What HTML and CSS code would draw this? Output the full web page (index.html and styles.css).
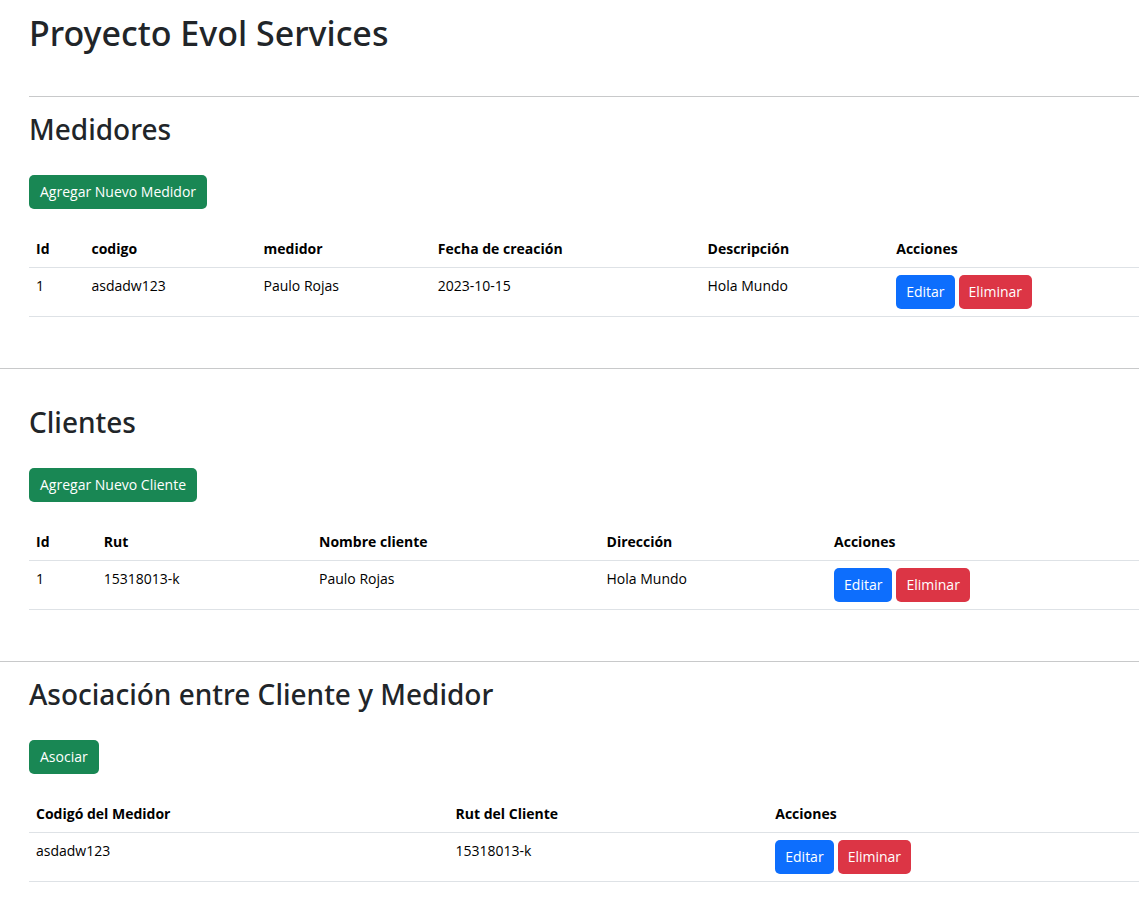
FILE: index.html
```html
<!DOCTYPE html>
<html lang="es">
<head>
<meta charset="utf-8">
<title>Proyecto Evol Services</title>
<link rel="stylesheet" href="styles.css">
</head>
<body>
<header class="page-header">
  <h1>Proyecto Evol Services</h1>
</header>
<main>
  <section class="section section-first">
    <h2>Medidores</h2>
    <button class="btn btn-success" type="button">Agregar Nuevo Medidor</button>
    <table class="table meters">
      <colgroup><col class="c1"><col class="c2"><col class="c3"><col class="c4"><col class="c5"><col></colgroup>
      <thead><tr><th>Id</th><th>codigo</th><th>medidor</th><th>Fecha de creación</th><th>Descripción</th><th>Acciones</th></tr></thead>
      <tbody><tr><td>1</td><td>asdadw123</td><td>Paulo Rojas</td><td>2023-10-15</td><td>Hola Mundo</td>
        <td><div class="actions"><button class="btn btn-primary" type="button">Editar</button><button class="btn btn-danger" type="button">Eliminar</button></div></td></tr></tbody>
    </table>
  </section>
  <section class="section section-clients">
    <h2>Clientes</h2>
    <button class="btn btn-success" type="button">Agregar Nuevo Cliente</button>
    <table class="table clients">
      <colgroup><col class="c1"><col class="c2"><col class="c3"><col class="c4"><col></colgroup>
      <thead><tr><th>Id</th><th>Rut</th><th>Nombre cliente</th><th>Dirección</th><th>Acciones</th></tr></thead>
      <tbody><tr><td>1</td><td>15318013-k</td><td>Paulo Rojas</td><td>Hola Mundo</td>
        <td><div class="actions"><button class="btn btn-primary" type="button">Editar</button><button class="btn btn-danger" type="button">Eliminar</button></div></td></tr></tbody>
    </table>
  </section>
  <section class="section">
    <h2>Asociación entre Cliente y Medidor</h2>
    <button class="btn btn-success" type="button">Asociar</button>
    <table class="table links">
      <colgroup><col class="c1"><col class="c2"><col></colgroup>
      <thead><tr><th>Codigó del Medidor</th><th>Rut del Cliente</th><th>Acciones</th></tr></thead>
      <tbody><tr><td>asdadw123</td><td>15318013-k</td>
        <td><div class="actions"><button class="btn btn-primary" type="button">Editar</button><button class="btn btn-danger" type="button">Eliminar</button></div></td></tr></tbody>
    </table>
  </section>
</main>
</body>
</html>
```
FILE: styles.css
```css
* { box-sizing: border-box; }
body {
  margin: 0;
  background: #fff;
  color: #212529;
  font-family: "Open Sans", "Noto Sans", sans-serif;
  font-size: 14px;
  line-height: 22px;
}
h1, h2 {
  margin: 0;
  font-family: "Noto Sans", "Open Sans", sans-serif;
  font-weight: 500;
}
h1 { font-size: 34px; line-height: 40px; }
h2 { font-size: 28px; line-height: 32px; margin-bottom: 30px; }
.page-header { padding: 13px 0 43px 29px; }
.section {
  padding: 16px 0 51px 29px;
  border-top: 1px solid #c8c9ca;
}
.section-first { margin-left: 29px; padding-left: 0; }
.section-clients { padding-top: 37px; }
.btn {
  display: inline-block;
  height: 34px;
  padding: 0 11px;
  border: 0;
  border-radius: 5px;
  color: #fff;
  font: inherit;
  white-space: nowrap;
}
.btn-success { background: #198754; }
.btn-primary { background: #0d6efd; }
.btn-danger { background: #dc3545; }
.table {
  width: 100%;
  margin-top: 22px;
  border-collapse: collapse;
  table-layout: fixed;
  color: #000;
}
.table th, .table td {
  padding: 7px;
  border-bottom: 1px solid #dee2e6;
  text-align: left;
  vertical-align: top;
  white-space: nowrap;
}
.table th { font-weight: 700; }
.actions { display: flex; gap: 4px; }
.actions .btn { padding: 0 10px; }
.meters .c1 { width: 5%; }
.meters .c2 { width: 15.5%; }
.meters .c3 { width: 15.7%; }
.meters .c4 { width: 24.3%; }
.meters .c5 { width: 17%; }
.clients .c1 { width: 6.1%; }
.clients .c2 { width: 19.4%; }
.clients .c3 { width: 25.9%; }
.clients .c4 { width: 20.5%; }
.links .c1 { width: 37.8%; }
.links .c2 { width: 28.8%; }
```
